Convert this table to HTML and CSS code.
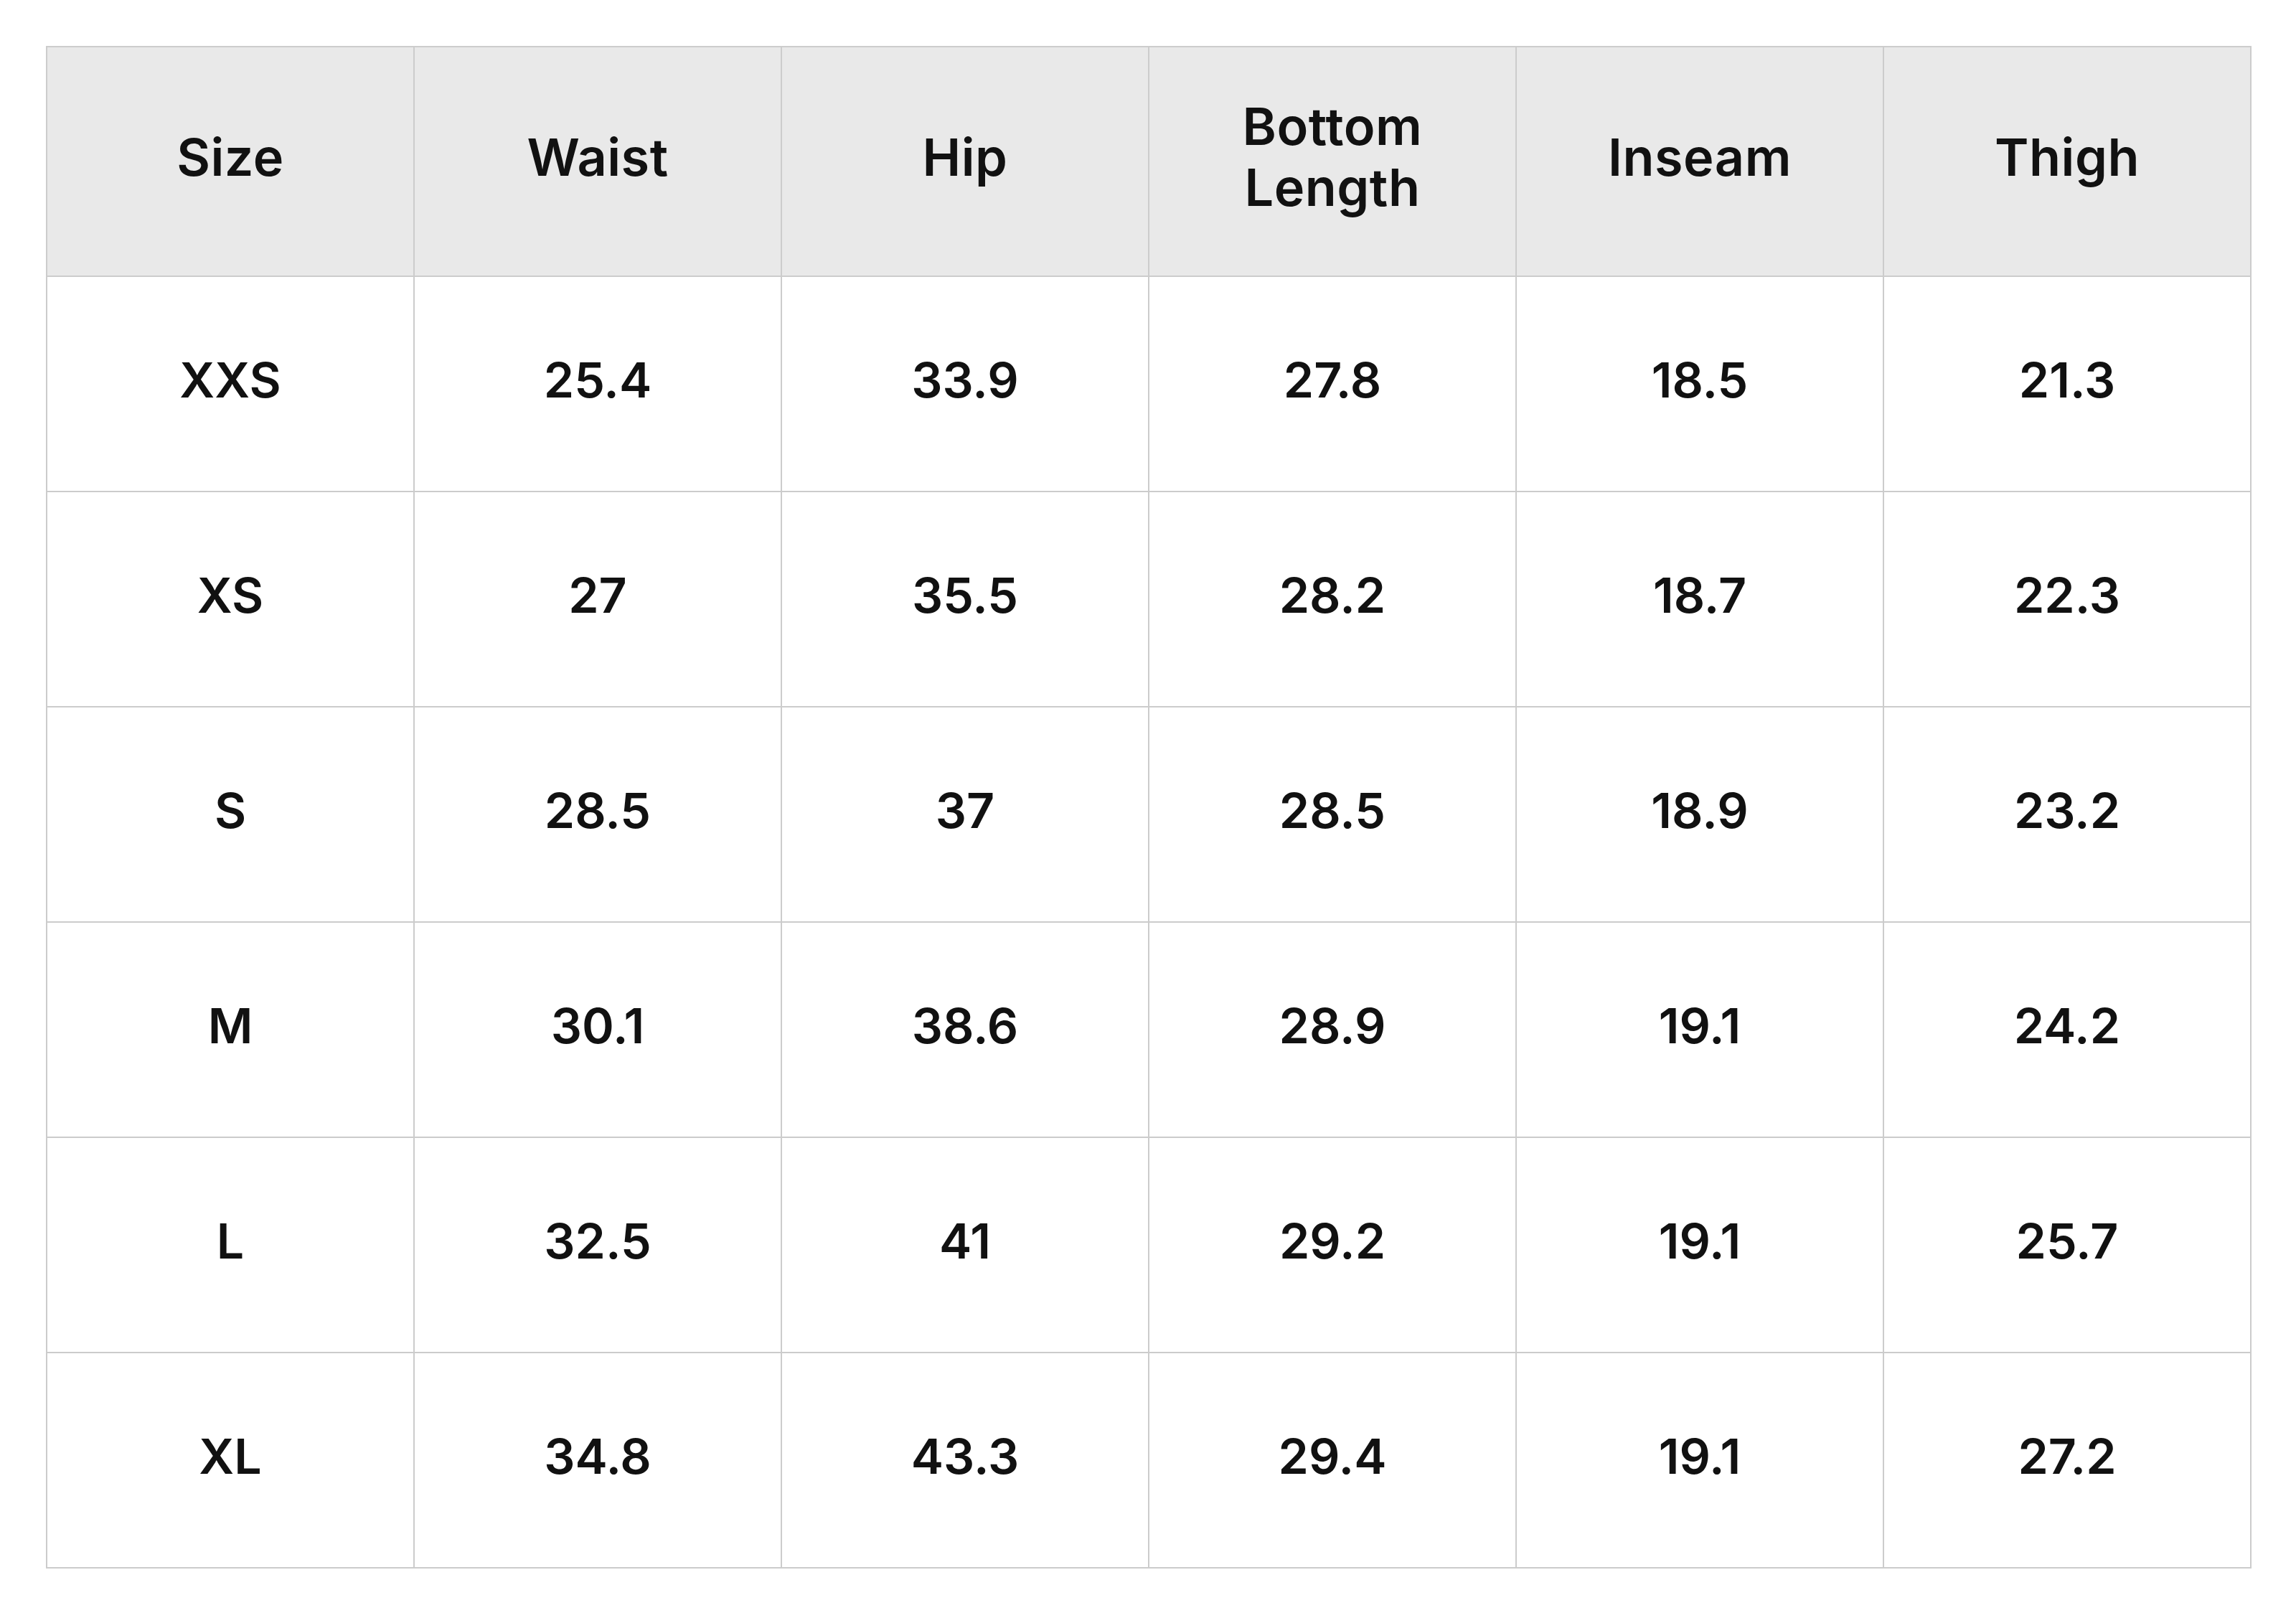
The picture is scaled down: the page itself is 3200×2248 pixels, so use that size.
FILE: index.html
```html
<!DOCTYPE html>
<html lang="en">
<head>
<meta charset="utf-8">
<title>Size Chart</title>
<link rel="stylesheet" href="styles.css">
</head>
<body>
<main class="page">
  <table class="size-chart">
    <thead>
      <tr>
        <th>Size</th>
        <th>Waist</th>
        <th>Hip</th>
        <th>Bottom<br>Length</th>
        <th>Inseam</th>
        <th>Thigh</th>
      </tr>
    </thead>
    <tbody>
      <tr><td>XXS</td><td>25.4</td><td>33.9</td><td>27.8</td><td>18.5</td><td>21.3</td></tr>
      <tr><td>XS</td><td>27</td><td>35.5</td><td>28.2</td><td>18.7</td><td>22.3</td></tr>
      <tr><td>S</td><td>28.5</td><td>37</td><td>28.5</td><td>18.9</td><td>23.2</td></tr>
      <tr><td>M</td><td>30.1</td><td>38.6</td><td>28.9</td><td>19.1</td><td>24.2</td></tr>
      <tr><td>L</td><td>32.5</td><td>41</td><td>29.2</td><td>19.1</td><td>25.7</td></tr>
      <tr><td>XL</td><td>34.8</td><td>43.3</td><td>29.4</td><td>19.1</td><td>27.2</td></tr>
    </tbody>
  </table>
</main>
</body>
</html>
```

FILE: styles.css
```css
html, body {
  margin: 0;
  padding: 0;
  background: #ffffff;
}

.page {
  padding: 64px;
}

.size-chart {
  width: 3074px;
  border-collapse: collapse;
  table-layout: fixed;
  font-family: Inter, "Liberation Sans", sans-serif;
  font-weight: 600;
  color: #111111;
}

.size-chart th,
.size-chart td {
  border: 2px solid #cccccc;
  text-align: center;
  vertical-align: middle;
  padding: 0;
  box-sizing: border-box;
}

.size-chart th {
  background: #e9e9e9;
  height: 320px;
  padding-bottom: 14px;
  font-size: 72px;
  line-height: 85px;
  letter-spacing: 0.5px;
  font-weight: 600;
}

.size-chart td {
  height: 300px;
  padding-bottom: 12px;
  font-size: 68px;
  line-height: 1;
}
```
